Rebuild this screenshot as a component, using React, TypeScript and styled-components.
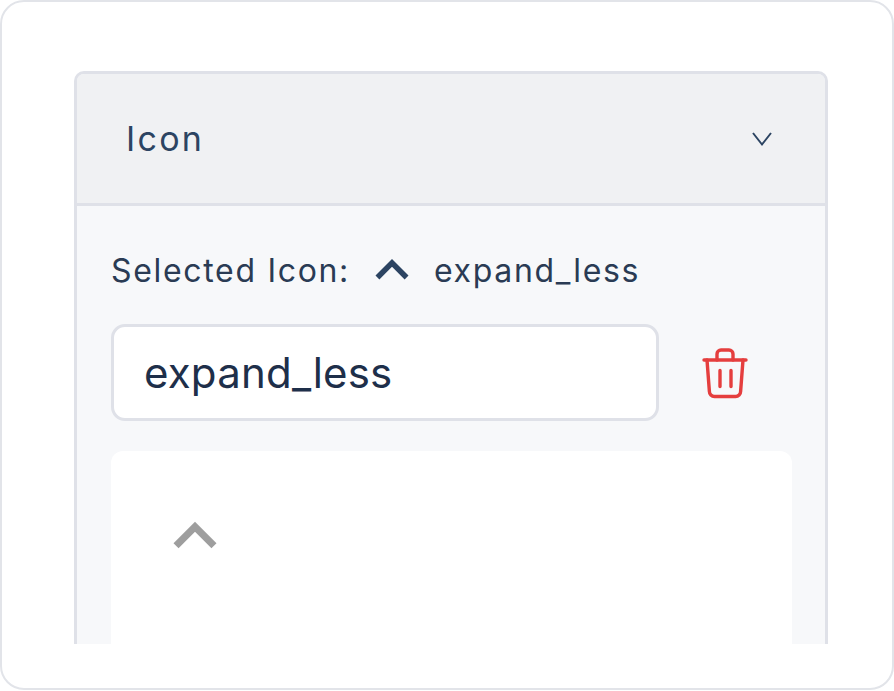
import React from "react";
import styled, { createGlobalStyle } from "styled-components";

const Global = createGlobalStyle`
  html, body { margin: 0; padding: 0; background: #fff; }
  body { font-family: Inter, "Liberation Sans", sans-serif; }
`;

const Frame = styled.div`
  box-sizing: border-box;
  width: 894px;
  height: 690px;
  border: 2px solid #e2e4e9;
  border-radius: 24px;
  background: #fff;
  padding: 69px 64px 44px 72px;
`;

const Clip = styled.div`
  height: 573px;
  overflow: hidden;
`;

const Panel = styled.section`
  box-sizing: border-box;
  height: 640px;
  border: 3px solid #dfe1e8;
  border-radius: 10px;
  background: #f7f8fa;
  overflow: hidden;
`;

const Header = styled.header`
  box-sizing: border-box;
  height: 132px;
  display: flex;
  align-items: center;
  justify-content: space-between;
  padding: 0 49px 0 49px;
  background: #f0f1f3;
  border-bottom: 3px solid #dfe1e8;
`;

const Title = styled.span`
  font-size: 34px;
  font-weight: 420;
  letter-spacing: 2.3px;
  color: #2c4462;
`;

const Body = styled.div`
  padding: 43px 33px 0 34px;
`;

const SelectedRow = styled.div`
  display: flex;
  align-items: center;
  height: 42px;
  font-size: 32px;
  letter-spacing: 1.68px;
  color: #2a3b54;
`;

const SelectedIcon = styled.svg`
  width: 66px;
  height: 66px;
  margin: 0 9px 0 9px;
  flex: none;
  fill: #2c4462;
`;

const InputRow = styled.div`
  display: flex;
  align-items: center;
  margin-top: 33px;
`;

const NameInput = styled.input`
  box-sizing: border-box;
  width: 548px;
  height: 97px;
  padding: 0 30px;
  border: 3px solid #dfe1e8;
  border-radius: 14px;
  background: #fff;
  font-family: inherit;
  font-size: 42px;
  letter-spacing: 0.2px;
  color: #1e2f4a;
  outline: none;
`;

const TrashButton = styled.button`
  display: flex;
  margin-left: 42px;
  padding: 0;
  border: 0;
  background: none;
`;

const Grid = styled.div`
  height: 300px;
  margin-top: 30px;
  padding: 42px 41px;
  border-radius: 12px;
  background: #fff;
`;

const GridIcon = styled.svg`
  display: block;
  width: 86px;
  height: 86px;
  fill: #9e9e9e;
`;

const ChevronDown = styled.svg`
  width: 28px;
  height: 28px;
  fill: none;
  stroke: #2c4462;
  stroke-width: 2;
`;

const expandLess = "M12 8l-6 6 1.41 1.41L12 10.83l4.59 4.58L18 14z";

export default function App() {
  return (
    <>
      <Global />
      <Frame>
        <Clip>
          <Panel>
            <Header>
              <Title>Icon</Title>
              <ChevronDown viewBox="0 0 28 28">
                <path d="M5 8l9 11.5L23 8" />
              </ChevronDown>
            </Header>
            <Body>
              <SelectedRow>
                <span>Selected Icon:</span>
                <SelectedIcon viewBox="0 0 24 24">
                  <path d={expandLess} />
                </SelectedIcon>
                <span>expand_less</span>
              </SelectedRow>
              <InputRow>
                <NameInput readOnly value="expand_less" />
                <TrashButton aria-label="Delete">
                  <svg width="48" height="52" viewBox="0 0 48 52" fill="none" stroke="#e53e3e" strokeWidth="3.4" strokeLinecap="round" strokeLinejoin="round">
                    <path d="M3 13h42" />
                    <path d="M6 13l2.4 31.5a5 5 0 0 0 5 5h21.2a5 5 0 0 0 5-5L42 13" />
                    <path d="M16 13V7a4 4 0 0 1 4-4h8a4 4 0 0 1 4 4v6" />
                    <path d="M19 23.5v16M30 23.5v16" />
                  </svg>
                </TrashButton>
              </InputRow>
              <Grid>
                <GridIcon viewBox="0 0 24 24">
                  <path d={expandLess} />
                </GridIcon>
              </Grid>
            </Body>
          </Panel>
        </Clip>
      </Frame>
    </>
  );
}
